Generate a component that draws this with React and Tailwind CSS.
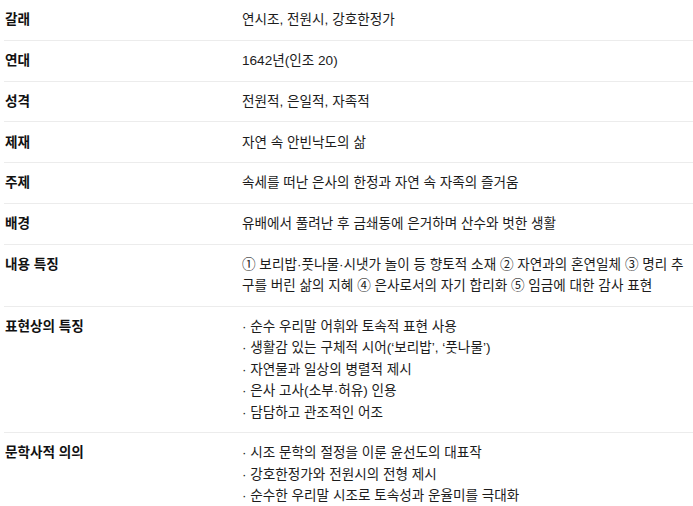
import React from "react";

const rows = [
    { label: "갈래", value: "연시조, 전원시, 강호한정가" },
    { label: "연대", value: "1642년(인조 20)" },
    { label: "성격", value: "전원적, 은일적, 자족적" },
    { label: "제재", value: "자연 속 안빈낙도의 삶" },
    { label: "주제", value: "속세를 떠난 은사의 한정과 자연 속 자족의 즐거움" },
    { label: "배경", value: "유배에서 풀려난 후 금쇄동에 은거하며 산수와 벗한 생활" },
    {
        label: "내용 특징",
        value: "① 보리밥·풋나물·시냇가 놀이 등 향토적 소재 ② 자연과의 혼연일체 ③ 명리 추구를 버린 삶의 지혜 ④ 은사로서의 자기 합리화 ⑤ 임금에 대한 감사 표현",
    },
    {
        label: "표현상의 특징",
        list: [
            "순수 우리말 어휘와 토속적 표현 사용",
            "생활감 있는 구체적 시어(‘보리밥’, ‘풋나물’)",
            "자연물과 일상의 병렬적 제시",
            "은사 고사(소부·허유) 인용",
            "담담하고 관조적인 어조",
        ],
    },
    {
        label: "문학사적 의의",
        list: [
            "시조 문학의 절정을 이룬 윤선도의 대표작",
            "강호한정가와 전원시의 전형 제시",
            "순수한 우리말 시조로 토속성과 운율미를 극대화",
        ],
    },
];

const App = () => {
    return (
        <div className="bg-white min-h-screen pl-[4px] text-[13.6px] leading-[21.4px] text-[#1c1c1c] font-['Liberation_Sans','Noto_Sans_CJK_KR',sans-serif]">
            {rows.map((row, i) => (
                <div
                    key={row.label}
                    className={`flex py-[9.2px] ${i < rows.length - 1 ? "border-b border-[#ececec]" : ""}`}
                >
                    <div className="w-[238px] shrink-0 pl-[1px] font-bold text-[#111]">{row.label}</div>
                    <div className="flex-1 pr-1">
                        {row.list ? (
                            <ul>
                                {row.list.map((item) => (
                                    <li key={item}>· {item}</li>
                                ))}
                            </ul>
                        ) : (
                            row.value
                        )}
                    </div>
                </div>
            ))}
        </div>
    );
};

export default App;
